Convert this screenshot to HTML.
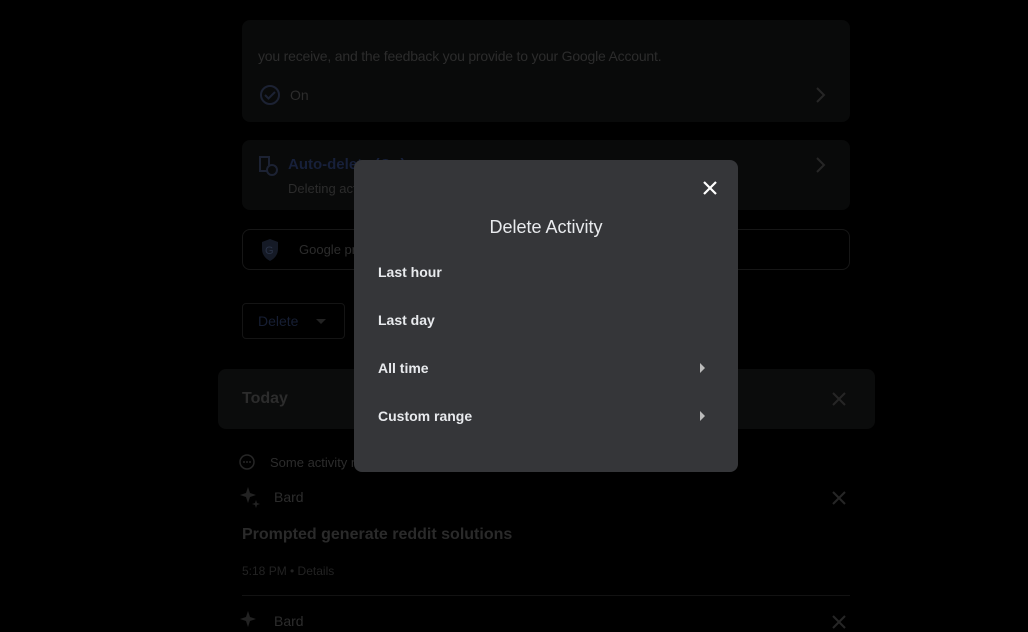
<!DOCTYPE html>
<html><head><meta charset="utf-8"><style>
*{margin:0;padding:0;box-sizing:border-box}
body{width:1028px;height:623px;background:#000;font-family:"Liberation Sans",sans-serif;position:relative;overflow:hidden;color:#2c2c2c}
.a{position:absolute}
.card{position:absolute;background:#090a0a;border-radius:8px}
.dim{color:#2c2c2c}
.modal{position:absolute;left:354px;top:160px;width:384px;height:312px;background:#353639;border-radius:8px;color:#e8eaed}
.item{position:absolute;left:24px;font-size:14px;font-weight:bold;color:#e8eaed}
.tri{position:absolute;left:346px;width:0;height:0;border-top:5px solid transparent;border-bottom:5px solid transparent;border-left:5px solid #bbb}
</style></head><body>
<div class="card" style="left:242px;top:20px;width:608px;height:102px"></div>
<div class="a dim" style="left:258px;top:48px;font-size:14px;letter-spacing:-0.2px">you receive, and the feedback you provide to your Google Account.</div>
<svg class="a" style="left:259px;top:84px" width="22" height="22"><circle cx="11" cy="11" r="9" fill="none" stroke="#1c2233" stroke-width="2"/><path d="M6 11l3.5 3.5L16 8" fill="none" stroke="#1c2233" stroke-width="2"/></svg>
<div class="a dim" style="left:290px;top:87px;font-size:14px">On</div>
<svg class="a" style="left:814px;top:86px" width="14" height="18"><path d="M3 2l7 7-7 7" fill="none" stroke="#262626" stroke-width="2"/></svg>
<div class="card" style="left:242px;top:140px;width:608px;height:70px"></div>
<svg class="a" style="left:258px;top:155px" width="22" height="22"><rect x="2" y="2" width="9" height="14" fill="none" stroke="#1c2233" stroke-width="2"/><circle cx="14" cy="15" r="5" fill="#090a0a" stroke="#1c2233" stroke-width="2"/></svg>
<div class="a" style="left:288px;top:156px;font-size:15px;font-weight:bold;color:#17203a">Auto-delete (On)</div>
<div class="a dim" style="left:288px;top:181px;font-size:13px">Deleting activity</div>
<svg class="a" style="left:814px;top:156px" width="14" height="18"><path d="M3 2l7 7-7 7" fill="none" stroke="#262626" stroke-width="2"/></svg>
<div class="a" style="left:242px;top:229px;width:608px;height:41px;border:1px solid #161616;border-radius:8px"></div>
<svg class="a" style="left:260px;top:238px" width="20" height="24"><path d="M10 1l8 3v7c0 6-4 10-8 12-4-2-8-6-8-12V4z" fill="#151a26"/><text x="5" y="16" font-size="11" fill="#2a3347" font-family="Liberation Sans">G</text></svg>
<div class="a dim" style="left:299px;top:242px;font-size:13px">Google protects your privacy</div>
<div class="a" style="left:242px;top:303px;width:103px;height:36px;border:1px solid #141414;border-radius:4px"></div>
<div class="a" style="left:258px;top:313px;font-size:14px;color:#161e33">Delete</div>
<div class="a" style="left:316px;top:319px;border-left:5px solid transparent;border-right:5px solid transparent;border-top:5px solid #222"></div>
<div class="card" style="left:218px;top:369px;width:657px;height:60px;background:#0b0c0c"></div>
<div class="a dim" style="left:242px;top:390px;font-size:16px;font-weight:bold">Today</div>
<svg class="a" style="left:831px;top:391px" width="16" height="16"><path d="M2 2l12 12M14 2L2 14" stroke="#262626" stroke-width="2"/></svg>
<svg class="a" style="left:238px;top:453px" width="18" height="18"><circle cx="9" cy="9" r="7" fill="none" stroke="#262626" stroke-width="1.5"/><circle cx="6" cy="9" r="1" fill="#262626"/><circle cx="9" cy="9" r="1" fill="#262626"/><circle cx="12" cy="9" r="1" fill="#262626"/></svg>
<div class="a dim" style="left:270px;top:455px;font-size:13px">Some activity may not appear yet</div>
<svg class="a" style="left:240px;top:486px" width="22" height="22"><path d="M8 1l2 6 6 2-6 2-2 6-2-6-6-2 6-2z" fill="#222"/><path d="M16 14l1 3 3 1-3 1-1 3-1-3-3-1 3-1z" fill="#222"/></svg>
<div class="a dim" style="left:274px;top:489px;font-size:14px">Bard</div>
<svg class="a" style="left:831px;top:490px" width="16" height="16"><path d="M2 2l12 12M14 2L2 14" stroke="#262626" stroke-width="2"/></svg>
<div class="a" style="left:242px;top:526px;font-size:16px;font-weight:bold;color:#2a2a2a">Prompted generate reddit solutions</div>
<div class="a" style="left:242px;top:564px;font-size:12px;color:#222">5:18 PM • Details</div>
<div class="a" style="left:242px;top:595px;width:608px;height:1px;background:#121212"></div>
<svg class="a" style="left:240px;top:610px" width="22" height="22"><path d="M8 1l2 6 6 2-6 2-2 6-2-6-6-2 6-2z" fill="#222"/></svg>
<div class="a dim" style="left:274px;top:613px;font-size:14px">Bard</div>
<svg class="a" style="left:831px;top:614px" width="16" height="16"><path d="M2 2l12 12M14 2L2 14" stroke="#262626" stroke-width="2"/></svg>

<div class="modal">
<svg class="a" style="left:348px;top:20px" width="16" height="16"><path d="M2 2l12 12M14 2L2 14" stroke="#fff" stroke-width="2.2"/></svg>
<div class="a" style="left:0;width:384px;top:57px;text-align:center;font-size:18px;color:#e8eaed">Delete Activity</div>
<div class="item" style="top:104px">Last hour</div>
<div class="item" style="top:152px">Last day</div>
<div class="item" style="top:200px">All time</div>
<div class="tri" style="top:203px"></div>
<div class="item" style="top:248px">Custom range</div>
<div class="tri" style="top:251px"></div>
</div>
</body></html>
